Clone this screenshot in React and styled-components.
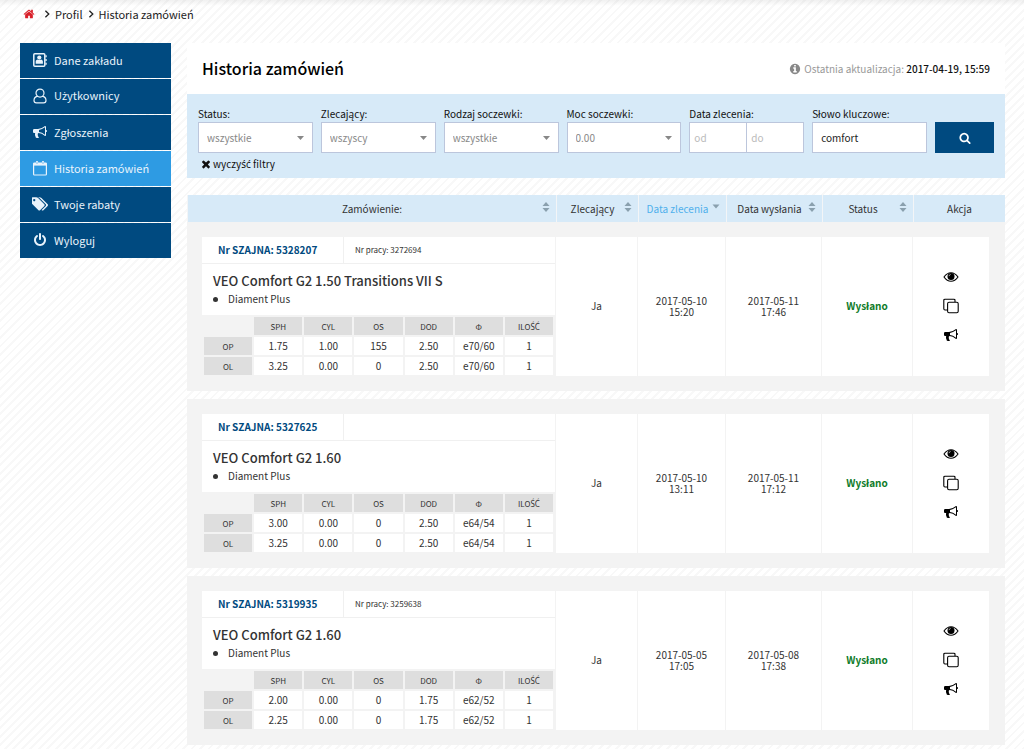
import React from "react";
import styled, { createGlobalStyle } from "styled-components";

const GlobalStyle = createGlobalStyle`
  *, *::before, *::after { box-sizing: border-box; }
  body {
    margin: 0;
    min-height: 100vh;
    color: #333;
    font-family: "Source Sans Pro", "Noto Sans CJK SC", "Noto Sans", sans-serif;
    font-size: 10px;
    line-height: 16px;
    background:
      linear-gradient(#0000000f, #00000000) top / 100% 6px no-repeat,
      repeating-linear-gradient(135deg, #fff 0, #fff 4px, #f8f8f8 4px, #f8f8f8 6px);
  }
  button, input, select { font: inherit; color: inherit; }
  a { color: inherit; text-decoration: none; }
`;

const Accented = styled.span`
  font-family: "Noto Sans", sans-serif;
`;

/* ---------- icons ---------- */

const Svg = styled.svg`
  display: block;
  flex: none;
  width: ${(p) => p.$size || 14}px;
  height: ${(p) => p.$size || 14}px;
  fill: currentColor;
`;

const paths = {
  home: "M1472 992v480q0 26-19 45t-45 19h-384v-384h-256v384h-384q-26 0-45-19t-19-45v-480q0-1 .5-3t.5-3l575-474 575 474q1 2 1 6zm223-69l-62 74q-8 9-21 11h-3q-13 0-21-7l-692-577-692 577q-12 8-24 7-13-2-21-11l-62-74q-8-10-7-23.5t11-21.5l719-599q32-26 76-26t76 26l244 204v-195q0-14 9-23t23-9h192q14 0 23 9t9 23v408l219 182q10 8 11 21.5t-7 23.5z",
  search: "M1216 832q0-185-131.5-316.5t-316.5-131.5-316.5 131.5-131.5 316.5 131.5 316.5 316.5 131.5 316.5-131.5 131.5-316.5zm512 832q0 52-38 90t-90 38q-54 0-90-38l-343-342q-179 124-399 124-143 0-273.5-55.5t-225-150-150-225-55.5-273.5 55.5-273.5 150-225 225-150 273.5-55.5 273.5 55.5 225 150 150 225 55.5 273.5q0 220-124 399l343 343q37 37 37 90z",
  bullhorn: "M1664 640q53 0 90.5 37.5t37.5 90.5-37.5 90.5-90.5 37.5v384q0 52-38 90t-90 38q-417-347-812-380-58 19-91 66t-31 100.5 40 92.5q-20 33-23 65.5t6 58 33.5 55 48 50 61.5 50.5q-29 58-111.5 83t-168.5 11.5-132-55.5q-7-23-29.5-87.5t-32-94.5-23-89-15-101 3.5-98.5 22-110.5h-122q-66 0-113-47t-47-113v-192q0-66 47-113t113-47h480q435 0 896-384 52 0 90 38t38 90v384zm-128 604v-954q-394 302-768 343v270q377 42 768 341z",
  info: "M1152 1376v-160q0-14-9-23t-23-9h-96v-512q0-14-9-23t-23-9h-320q-14 0-23 9t-9 23v160q0 14 9 23t23 9h96v320h-96q-14 0-23 9t-9 23v160q0 14 9 23t23 9h448q14 0 23-9t9-23zm-128-896v-160q0-14-9-23t-23-9h-192q-14 0-23 9t-9 23v160q0 14 9 23t23 9h192q14 0 23-9t9-23zm640 416q0 209-103 385.5t-279.5 279.5-385.5 103-385.5-103-279.5-279.5-103-385.5 103-385.5 279.5-279.5 385.5-103 385.5 103 279.5 279.5 103 385.5z",
  times: "M1490 1322q0 40-28 68l-136 136q-28 28-68 28t-68-28l-294-294-294 294q-28 28-68 28t-68-28l-136-136q-28-28-28-68t28-68l294-294-294-294q-28-28-28-68t28-68l136-136q28-28 68-28t68 28l294 294 294-294q28-28 68-28t68 28l136 136q28 28 28 68t-28 68l-294 294 294 294q28 28 28 68z",
  tags: "M384 448q0-53-37.5-90.5t-90.5-37.5-90.5 37.5-37.5 90.5 37.5 90.5 90.5 37.5 90.5-37.5 37.5-90.5zm1067 576q0 53-37 90l-491 492q-39 37-91 37-53 0-90-37l-715-716q-38-37-64.5-101t-26.5-117v-416q0-52 38-90t90-38h416q53 0 117 26.5t102 64.5l715 714q37 39 37 91zm384 0q0 53-37 90l-491 492q-39 37-91 37-36 0-59-14t-53-45l470-470q37-37 37-90 0-52-37-91l-715-714q-38-38-102-64.5t-117-26.5h224q53 0 117 26.5t102 64.5l715 714q37 39 37 91z",
  power: "M1664 896q0 156-61 298t-164 245-245 164-298 61-298-61-245-164-164-245-61-298q0-182 80.5-343t226.5-270q43-32 95.5-25t83.5 50q32 42 24.5 94.5t-49.5 84.5q-98 74-151.5 181t-53.5 228q0 104 40.5 198.5t109.5 163.5 163.5 109.5 198.5 40.5 198.5-40.5 163.5-109.5 109.5-163.5 40.5-198.5q0-121-53.5-228t-151.5-181q-42-32-49.5-84.5t24.5-94.5q31-43 84-50t95 25q146 109 226.5 270t80.5 343zm-640-768v640q0 52-38 90t-90 38-90-38-38-90v-640q0-52 38-90t90-38 90 38 38 90z",
};

const Icon = ({ name, size }) => (
  <Svg $size={size} viewBox="0 0 1792 1792" aria-hidden="true">
    <path d={paths[name]} />
  </Svg>
);

const TagsIcon = () => (
  <Svg $size={16} viewBox="0 0 1835 1792" aria-hidden="true">
    <path d={paths.tags} />
  </Svg>
);

const AddressBook = () => (
  <Svg $size={16} viewBox="0 0 16 16" aria-hidden="true">
    <rect x="1.8" y="1.8" width="11" height="12.4" rx="1" fill="none" stroke="currentColor" strokeWidth="1.5" />
    <circle cx="7.3" cy="5.6" r="2.1" />
    <path d="M3.7 11.8V9.6C3.7 8.3 4.6 7.6 5.6 7.4Q7.3 8.4 9 7.4C10 7.6 10.9 8.3 10.9 9.6V11.8Z" />
    <path d="M13.4 3.2h1.3v2h-1.3zM13.4 7h1.3v2h-1.3zM13.4 10.8h1.3v2h-1.3z" />
  </Svg>
);

const UserOutline = () => (
  <Svg $size={16} viewBox="0 0 16 16" aria-hidden="true">
    <path
      d="M5.2 8.3C3.2 8.7 2 10.5 2 12.6C2 14 3 14.9 4.4 14.9H11.6C13 14.9 14 14 14 12.6C14 10.5 12.8 8.7 10.8 8.3M8 1.1a4 4 0 0 1 0 8a4 4 0 0 1 0-8Z"
      fill="none"
      stroke="currentColor"
      strokeWidth="1.2"
    />
  </Svg>
);

const CalendarIcon = () => (
  <Svg $size={16} viewBox="0 0 16 16" aria-hidden="true">
    <rect x="1.6" y="3" width="12.8" height="12" rx="0.8" fill="none" stroke="currentColor" strokeWidth="1.2" />
    <path d="M1.6 3h12.8v2.6H1.6z" />
    <rect x="3.9" y="1" width="2.2" height="3.8" rx="1" />
    <rect x="9.9" y="1" width="2.2" height="3.8" rx="1" />
    <path d="M4.7 2h.6v2h-.6zM10.7 2h.6v2h-.6z" fill="#2e9be3" />
  </Svg>
);

const EyeIcon = () => (
  <Svg $size={16} viewBox="0 0 16 16" aria-hidden="true">
    <path d="M1 8Q4 3.7 8 3.7T15 8Q12 12.3 8 12.3T1 8Z" fill="none" stroke="currentColor" strokeWidth="1.1" />
    <circle cx="8" cy="7.6" r="3.5" />
    <path d="M6 7.2Q6.1 5.6 7.7 5.5" fill="none" stroke="#fff" strokeWidth="0.6" />
  </Svg>
);

const CopyIcon = () => (
  <Svg $size={16} viewBox="0 0 16 16" aria-hidden="true">
    <g fill="none" stroke="currentColor" strokeWidth="1.1">
      <rect x="4.6" y="4.3" width="10.6" height="10.4" rx="1.4" />
      <path d="M12 4.1V2.4Q12 1.2 10.8 1.2H2Q.8 1.2 .8 2.4V10.8Q.8 12 2 12H4.4" />
    </g>
  </Svg>
);

const Chevron = () => (
  <Svg $size={8} viewBox="0 0 8 8" aria-hidden="true">
    <path d="M2.4 0.8L5.8 4L2.4 7.2" fill="none" stroke="#222" strokeWidth="1.3" />
  </Svg>
);

const Caret = styled.svg`
  position: absolute;
  right: 9px;
  top: 14px;
  width: 7px;
  height: 4px;
  fill: #888;
  pointer-events: none;
`;

const SortMark = styled.svg`
  position: absolute;
  right: 6px;
  top: 7px;
  width: 8px;
  height: 10px;
  fill: #8aa0ae;
`;

/* ---------- page frame ---------- */

const Breadcrumb = styled.nav`
  display: flex;
  align-items: center;
  gap: 4px;
  height: 28px;
  padding: 0 23px;
  color: #222;
  font-size: 11px;
`;

const HomeLink = styled.a`
  display: block;
  margin-right: 4px;
  color: #d9202a;
`;

const Columns = styled.div`
  display: grid;
  grid-template-columns: 152px minmax(0, 1fr);
  gap: 16px;
  align-items: start;
  padding: 15px 19px 0;
`;

const Menu = styled.nav`
  display: flex;
  flex-direction: column;
  gap: 1px;
  padding-left: 1px;
  font-size: 11px;
`;

const MenuLink = styled.a`
  display: flex;
  align-items: center;
  gap: 6px;
  height: 35px;
  padding: 0 0 2px 12px;
  color: #e9f3fb;
  background: ${(p) => (p.$active ? "#2e9be3" : "#004a80")};
`;

/* ---------- heading ---------- */

const TitleBar = styled.header`
  display: flex;
  align-items: center;
  justify-content: space-between;
  height: 51px;
  padding: 0 15px;
  background: #fff;
`;

const Title = styled.h1`
  margin: 0;
  padding-bottom: 2px;
  color: #000;
  font-size: 16px;
  font-weight: 500;
  line-height: 24px;
`;

const Updated = styled.p`
  display: flex;
  align-items: center;
  gap: 3px;
  margin: 0;
  color: #999;

  strong { color: #111; font-weight: 500; }
  svg { color: #888; }
`;

/* ---------- filters ---------- */

const Filters = styled.form`
  padding: 12px 11px 6px;
  background: #d7eaf8;
  color: #111;
`;

const FilterGrid = styled.div`
  display: grid;
  grid-template-columns: repeat(6, minmax(0, 1fr)) 59px;
  gap: 8px;
  align-items: end;
`;

const Label = styled.label`
  display: block;
  height: 16px;
  white-space: nowrap;
`;

const Control = styled.div`
  position: relative;
  display: flex;
`;

const Select = styled.select`
  appearance: none;
  width: 100%;
  height: 31px;
  padding: 0 8px;
  border: 1px solid #bcc6dc;
  border-radius: 0;
  background: #fff;
  color: #888;
`;

const Input = styled.input`
  flex: 1;
  min-width: 0;
  width: 100%;
  height: 31px;
  padding: 0 ${(p) => (p.$narrow ? 4 : 8)}px;
  border: 1px solid #bcc6dc;
  border-radius: 0;
  background: #fff;
  color: #222;

  & + & { border-left: 0; }
  &::placeholder { color: #bbb; }
`;

const SearchButton = styled.button`
  display: flex;
  align-items: center;
  justify-content: center;
  height: 31px;
  padding: 0;
  border: 0;
  background: #004a80;
  color: #fff;
`;

const ClearButton = styled.button`
  display: flex;
  align-items: center;
  gap: 1px;
  height: 16px;
  margin-top: 3px;
  padding: 0 2px;
  border: 0;
  background: none;
`;

/* ---------- orders ---------- */

const Orders = styled.table`
  width: 100%;
  margin-top: 17px;
  table-layout: fixed;
  border-collapse: separate;
  border-spacing: 0;
`;

const HeadCell = styled.th`
  position: relative;
  height: 27px;
  padding: 0 ${(p) => (p.$sortable ? 10 : 0)}px 0 0;
  border-left: 1px solid #f3f5f7;
  background: #d7eaf8;
  color: ${(p) => (p.$sorted ? "#4fb0ec" : "#333")};
  font-weight: 400;
  white-space: nowrap;
`;

const Cell = styled.td`
  padding: 0 0 2px;
  border: solid #f3f3f3;
  border-width: 15px 1px 15px 0;
  background: #fff;
  text-align: center;
  line-height: 11px;

  &:first-child { padding: 0; border-left-width: 15px; text-align: left; }
  &:last-child { border-right-width: 16px; }
`;

const GapCell = styled.td`
  height: 8px;
  padding: 0;
`;

const Numbers = styled.div`
  display: grid;
  grid-template-columns: 142px 1fr;
  height: 27px;
  border-bottom: 1px solid #f0f0f0;
  line-height: 26px;
`;

const OrderNo = styled.strong`
  padding-left: 16px;
  border-right: 1px solid #f0f0f0;
  color: #004a80;
  font-weight: 700;
`;

const JobNo = styled.span`
  padding-left: 11px;
  font-size: 8px;
`;

const Product = styled.div`
  height: 51px;
  padding: 7px 11px 0;
`;

const ProductName = styled.h2`
  margin: 0;
  font-size: 13px;
  font-weight: 500;
  line-height: 20px;
`;

const Coating = styled.p`
  display: flex;
  align-items: center;
  gap: 10px;
  margin: 0;
  line-height: 16px;

  &::before {
    content: "";
    width: 5px;
    height: 5px;
    border-radius: 50%;
    background: #333;
  }
`;

const Params = styled.table`
  width: 100%;
  margin-bottom: -1px;
  table-layout: fixed;
  border-collapse: separate;
  border-spacing: 2px;
  background: #f3f3f3;
  text-align: center;
  line-height: 18px;

  th, td { height: 18px; padding: 0; }
  th { padding-top: 2px; background: #dedede; font-size: 8px; font-weight: 400; line-height: 16px; }
  tbody td { background: #fff; }
`;

const Sent = styled.strong`
  color: #107c2a;
  font-weight: 700;
`;

const Actions = styled.div`
  display: flex;
  flex-direction: column;
  align-items: center;
  gap: 13px;
  color: #000;
`;

const ActionButton = styled.button`
  display: grid;
  place-items: center;
  width: 16px;
  height: 16px;
  padding: 0;
  border: 0;
  background: none;
`;

/* ---------- data ---------- */

const menu = [
  { label: "Dane zakładu", icon: <AddressBook /> },
  { label: <span>U<Accented>ż</Accented>ytkownicy</span>, icon: <UserOutline /> },
  { label: "Zgłoszenia", icon: <Icon name="bullhorn" size={14} /> },
  { label: "Historia zamówień", icon: <CalendarIcon />, active: true },
  { label: "Twoje rabaty", icon: <TagsIcon /> },
  { label: "Wyloguj", icon: <Icon name="power" size={14} /> },
];

const MenuIcon = styled.span`
  display: grid;
  place-items: center;
  width: 16px;
`;

const selects = [
  { id: "status", label: "Status:", value: "wszystkie" },
  { id: "orderer", label: "Zlecający:", value: "wszyscy" },
  { id: "lens", label: "Rodzaj soczewki:", value: "wszystkie" },
  { id: "diopter", label: "Moc soczewki:", value: "0.00" },
];

const heads = [
  { label: "Zamówienie:", sort: "both" },
  { label: "Zlecający", sort: "both", width: 82 },
  { label: "Data zlecenia", sort: "down", width: 88 },
  { label: "Data wysłania", sort: "both", width: 96 },
  { label: "Status", sort: "both", width: 91 },
  { label: "Akcja", width: 92 },
];

const paramHeads = ["SPH", "CYL", "OS", "DOD", "Φ", <>ILO<Accented>ŚĆ</Accented></>];

const orders = [
  {
    no: "5328207",
    job: "3272694",
    name: "VEO Comfort G2 1.50 Transitions VII S",
    ordered: ["2017-05-10", "15:20"],
    sent: ["2017-05-11", "17:46"],
    op: ["1.75", "1.00", "155", "2.50", "e70/60", "1"],
    ol: ["3.25", "0.00", "0", "2.50", "e70/60", "1"],
  },
  {
    no: "5327625",
    name: "VEO Comfort G2 1.60",
    ordered: ["2017-05-10", "13:11"],
    sent: ["2017-05-11", "17:12"],
    op: ["3.00", "0.00", "0", "2.50", "e64/54", "1"],
    ol: ["3.25", "0.00", "0", "2.50", "e64/54", "1"],
  },
  {
    no: "5319935",
    job: "3259638",
    name: "VEO Comfort G2 1.60",
    ordered: ["2017-05-05", "17:05"],
    sent: ["2017-05-08", "17:38"],
    op: ["2.00", "0.00", "0", "1.75", "e62/52", "1"],
    ol: ["2.25", "0.00", "0", "1.75", "e62/52", "1"],
  },
];

const Col = styled.col`
  width: ${(p) => (p.$width ? `${p.$width}px` : "auto")};
`;

const ParamRow = ({ side, values }) => (
  <tr>
    <th scope="row">{side}</th>
    {values.map((v, i) => (
      <td key={i}>{v}</td>
    ))}
  </tr>
);

const Order = ({ order, first }) => (
  <tbody>
    {!first && (
      <tr aria-hidden="true">
        <GapCell colSpan={6} />
      </tr>
    )}
    <tr>
      <Cell>
        <Numbers>
          <OrderNo>Nr SZAJNA: {order.no}</OrderNo>
          {order.job && <JobNo>Nr pracy: {order.job}</JobNo>}
        </Numbers>
        <Product>
          <ProductName>{order.name}</ProductName>
          <Coating>Diament Plus</Coating>
        </Product>
        <Params>
          <thead>
            <tr>
              <td />
              {paramHeads.map((h, i) => (
                <th key={i} scope="col">{h}</th>
              ))}
            </tr>
          </thead>
          <tbody>
            <ParamRow side="OP" values={order.op} />
            <ParamRow side="OL" values={order.ol} />
          </tbody>
        </Params>
      </Cell>
      <Cell>Ja</Cell>
      <Cell>{order.ordered[0]}<br />{order.ordered[1]}</Cell>
      <Cell>{order.sent[0]}<br />{order.sent[1]}</Cell>
      <Cell><Sent>Wysłano</Sent></Cell>
      <Cell>
        <Actions>
          <ActionButton type="button" aria-label="Podgląd"><EyeIcon /></ActionButton>
          <ActionButton type="button" aria-label="Kopiuj"><CopyIcon /></ActionButton>
          <ActionButton type="button" aria-label="Zgłoś"><Icon name="bullhorn" size={14} /></ActionButton>
        </Actions>
      </Cell>
    </tr>
  </tbody>
);

export default function App() {
  return (
    <>
      <GlobalStyle />
      <Breadcrumb aria-label="Okruszki">
        <HomeLink href="#" aria-label="Strona główna"><Icon name="home" size={12} /></HomeLink>
        <Chevron />
        <a href="#">Profil</a>
        <Chevron />
        <span>Historia zamówień</span>
      </Breadcrumb>
      <Columns>
        <Menu aria-label="Menu">
          {menu.map((m, i) => (
            <MenuLink key={i} href="#" $active={m.active}>
              <MenuIcon>{m.icon}</MenuIcon>
              {m.label}
            </MenuLink>
          ))}
        </Menu>
        <main>
          <TitleBar>
            <Title>Historia zamówień</Title>
            <Updated>
              <Icon name="info" size={12} />
              <span>Ostatnia aktualizacja: <strong>2017-04-19, 15:59</strong></span>
            </Updated>
          </TitleBar>
          <Filters onSubmit={(e) => e.preventDefault()}>
            <FilterGrid>
              {selects.map((s) => (
                <div key={s.id}>
                  <Label htmlFor={s.id}>{s.label}</Label>
                  <Control>
                    <Select id={s.id} defaultValue={s.value}>
                      <option>{s.value}</option>
                    </Select>
                    <Caret viewBox="0 0 7 4" aria-hidden="true"><path d="M0 0h7L3.5 4z" /></Caret>
                  </Control>
                </div>
              ))}
              <div>
                <Label htmlFor="from">Data zlecenia:</Label>
                <Control>
                  <Input id="from" $narrow placeholder="od" />
                  <Input $narrow placeholder="do" aria-label="Data zlecenia do" />
                </Control>
              </div>
              <div>
                <Label htmlFor="keyword">Słowo kluczowe:</Label>
                <Control>
                  <Input id="keyword" defaultValue="comfort" />
                </Control>
              </div>
              <SearchButton type="submit" aria-label="Szukaj"><Icon name="search" size={12} /></SearchButton>
            </FilterGrid>
            <ClearButton type="reset">
              <Icon name="times" size={12} />
              <span>wyczy<Accented>ść</Accented> filtry</span>
            </ClearButton>
          </Filters>
          <Orders>
            <colgroup>
              {heads.map((h) => <Col key={h.label} $width={h.width} />)}
            </colgroup>
            <thead>
              <tr>
                {heads.map((h) => (
                  <HeadCell key={h.label} scope="col" $sortable={h.width && h.sort} $sorted={h.sort === "down"}>
                    {h.label}
                    {h.sort && (
                      <SortMark viewBox="0 0 8 10" aria-hidden="true">
                        {h.sort === "both" ? <path d="M4 0L7.5 4H.5zM4 10L.5 6h7z" /> : <path d="M.5 2.5h7L4 6.5z" />}
                      </SortMark>
                    )}
                  </HeadCell>
                ))}
              </tr>
            </thead>
            {orders.map((o, i) => <Order key={o.no} order={o} first={i === 0} />)}
          </Orders>
        </main>
      </Columns>
    </>
  );
}
